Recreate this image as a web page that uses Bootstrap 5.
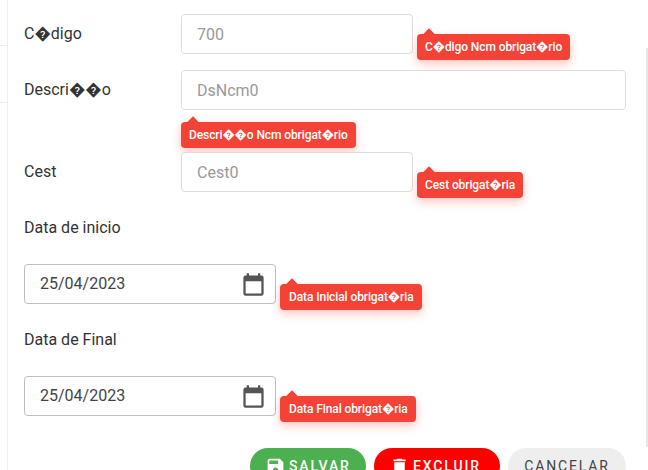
<!DOCTYPE html>
<html lang="pt">
<head>
<meta charset="utf-8">
<title>Ncm</title>
<link href="https://cdn.jsdelivr.net/npm/bootstrap@5.3.0/dist/css/bootstrap.min.css" rel="stylesheet">
<style>
html, body { height: 470px; overflow: hidden; background: #fff; }
body { font-family: Roboto, "DejaVu Sans", sans-serif; font-size: 16px; color: #333; }
.side-rail { width: 7px; flex: none; }
.rail-tick { height: 1px; background: #eee; }
.rail-tick-a { margin-top: 45px; }
.rail-tick-b { margin-top: 56px; }
.sheet { flex: 1 1 auto; min-width: 0; border-left: 1px solid #eee; padding: 14px 20px 0 16px; }
.scroll-rail { width: 2px; flex: none; height: 399px; margin-top: 48px; background: #e6e6e6; }
.field-row { margin-bottom: 16px; }
.field-row-tall { margin-bottom: 42px; }
.field-row-last { margin-bottom: 23px; }
.field-label { width: 157px; flex: none; line-height: 40px; margin: 0; }
.field-box { height: 40px; border: 1px solid #ddd; border-radius: 4px; padding: 0 15px; font-size: 16px; color: #333; }
.field-box::placeholder { color: #999; opacity: 1; }
.w-short { width: 232px; flex: none; }
.date-wrap { height: 40px; width: 252px; border: 1px solid #bdbdbd; border-radius: 4px; padding: 0 8px 0 15px; color: #444; }
.date-text { flex: 1; }
.date-label { line-height: 26px; margin: 0 0 23px; }
.date-row { margin-bottom: 23px; }
.date-row-last { margin-bottom: 32px; }
.hint { background: #f44336; color: #fff; font-size: 12px; font-weight: 500; line-height: 26px; height: 26px; padding: 0 8px; border-radius: 4px; box-shadow: 0 4px 10px rgba(244,67,54,.3); white-space: nowrap; letter-spacing: -.1px; }
.hint::before { content: ""; position: absolute; top: -4px; left: 8px; width: 8px; height: 8px; background: #f44336; transform: rotate(45deg); }
.hint-right { left: 393px; top: 20px; }
.hint-below { left: 157px; top: 52px; }
.hint-date { left: 256px; top: 20px; padding-left: 9px; }
.pill-btn { height: 36px; border: 0; border-radius: 18px; font-size: 14px; font-weight: 500; letter-spacing: 1.85px; padding: 0 0 0 15px; line-height: 1; }
.pill-btn svg { margin-right: 3px; }
.pill-save { background: #4caf50; color: #fff; width: 116px; }
.pill-del { background: #f00; color: #fff; width: 126px; }
.pill-cancel { background: #eee; color: #444; width: 118px; padding: 0; font-weight: 400; }
</style>
</head>
<body class="d-flex">
<div class="side-rail">
  <div class="rail-tick rail-tick-a"></div>
  <div class="rail-tick rail-tick-b"></div>
</div>
<form class="sheet">
  <div class="field-row d-flex position-relative">
    <label class="field-label">C�digo</label>
    <input class="form-control field-box w-short" placeholder="700">
    <div class="hint hint-right position-absolute">C�digo Ncm obrigat�rio</div>
  </div>
  <div class="field-row field-row-tall d-flex position-relative">
    <label class="field-label">Descri��o</label>
    <input class="form-control field-box" placeholder="DsNcm0">
    <div class="hint hint-below position-absolute">Descri��o Ncm obrigat�rio</div>
  </div>
  <div class="field-row field-row-last d-flex position-relative">
    <label class="field-label">Cest</label>
    <input class="form-control field-box w-short" placeholder="Cest0">
    <div class="hint hint-right position-absolute">Cest obrigat�ria</div>
  </div>
  <p class="date-label">Data de inicio</p>
  <div class="date-row position-relative">
    <div class="date-wrap d-flex align-items-center"><span class="date-text">25/04/2023</span>
      <svg width="27" height="27" viewBox="0 -1 24 24" fill="#555"><path d="M19 3h-1V1h-2v2H8V1H6v2H5a2 2 0 0 0-2 2v14a2 2 0 0 0 2 2h14a2 2 0 0 0 2-2V5a2 2 0 0 0-2-2zm0 16H5V8h14z"/></svg>
    </div>
    <div class="hint hint-date position-absolute">Data Inicial obrigat�ria</div>
  </div>
  <p class="date-label">Data de Final</p>
  <div class="date-row date-row-last position-relative">
    <div class="date-wrap d-flex align-items-center"><span class="date-text">25/04/2023</span>
      <svg width="27" height="27" viewBox="0 -1 24 24" fill="#555"><path d="M19 3h-1V1h-2v2H8V1H6v2H5a2 2 0 0 0-2 2v14a2 2 0 0 0 2 2h14a2 2 0 0 0 2-2V5a2 2 0 0 0-2-2zm0 16H5V8h14z"/></svg>
    </div>
    <div class="hint hint-date position-absolute">Data Final obrigat�ria</div>
  </div>
  <div class="d-flex justify-content-end gap-2">
    <button type="button" class="btn pill-btn pill-save d-inline-flex align-items-center"><svg width="21" height="21" viewBox="0 0 24 24" fill="#fff"><path d="M17 3H5a2 2 0 0 0-2 2v14a2 2 0 0 0 2 2h14a2 2 0 0 0 2-2V7zm-5 16a3 3 0 1 1 0-6 3 3 0 0 1 0 6zm3-10H5V5h10z"/></svg>SALVAR</button>
    <button type="button" class="btn pill-btn pill-del d-inline-flex align-items-center"><svg width="21" height="21" viewBox="0 0 24 24" fill="#fff"><path d="M6 19a2 2 0 0 0 2 2h8a2 2 0 0 0 2-2V7H6zM19 4h-3.5l-1-1h-5l-1 1H5v2h14z"/></svg>EXCLUIR</button>
    <button type="button" class="btn pill-btn pill-cancel d-inline-flex align-items-center justify-content-center">CANCELAR</button>
  </div>
</form>
<div class="scroll-rail"></div>
<script src="https://cdn.jsdelivr.net/npm/bootstrap@5.3.0/dist/js/bootstrap.bundle.min.js"></script>
</body>
</html>
